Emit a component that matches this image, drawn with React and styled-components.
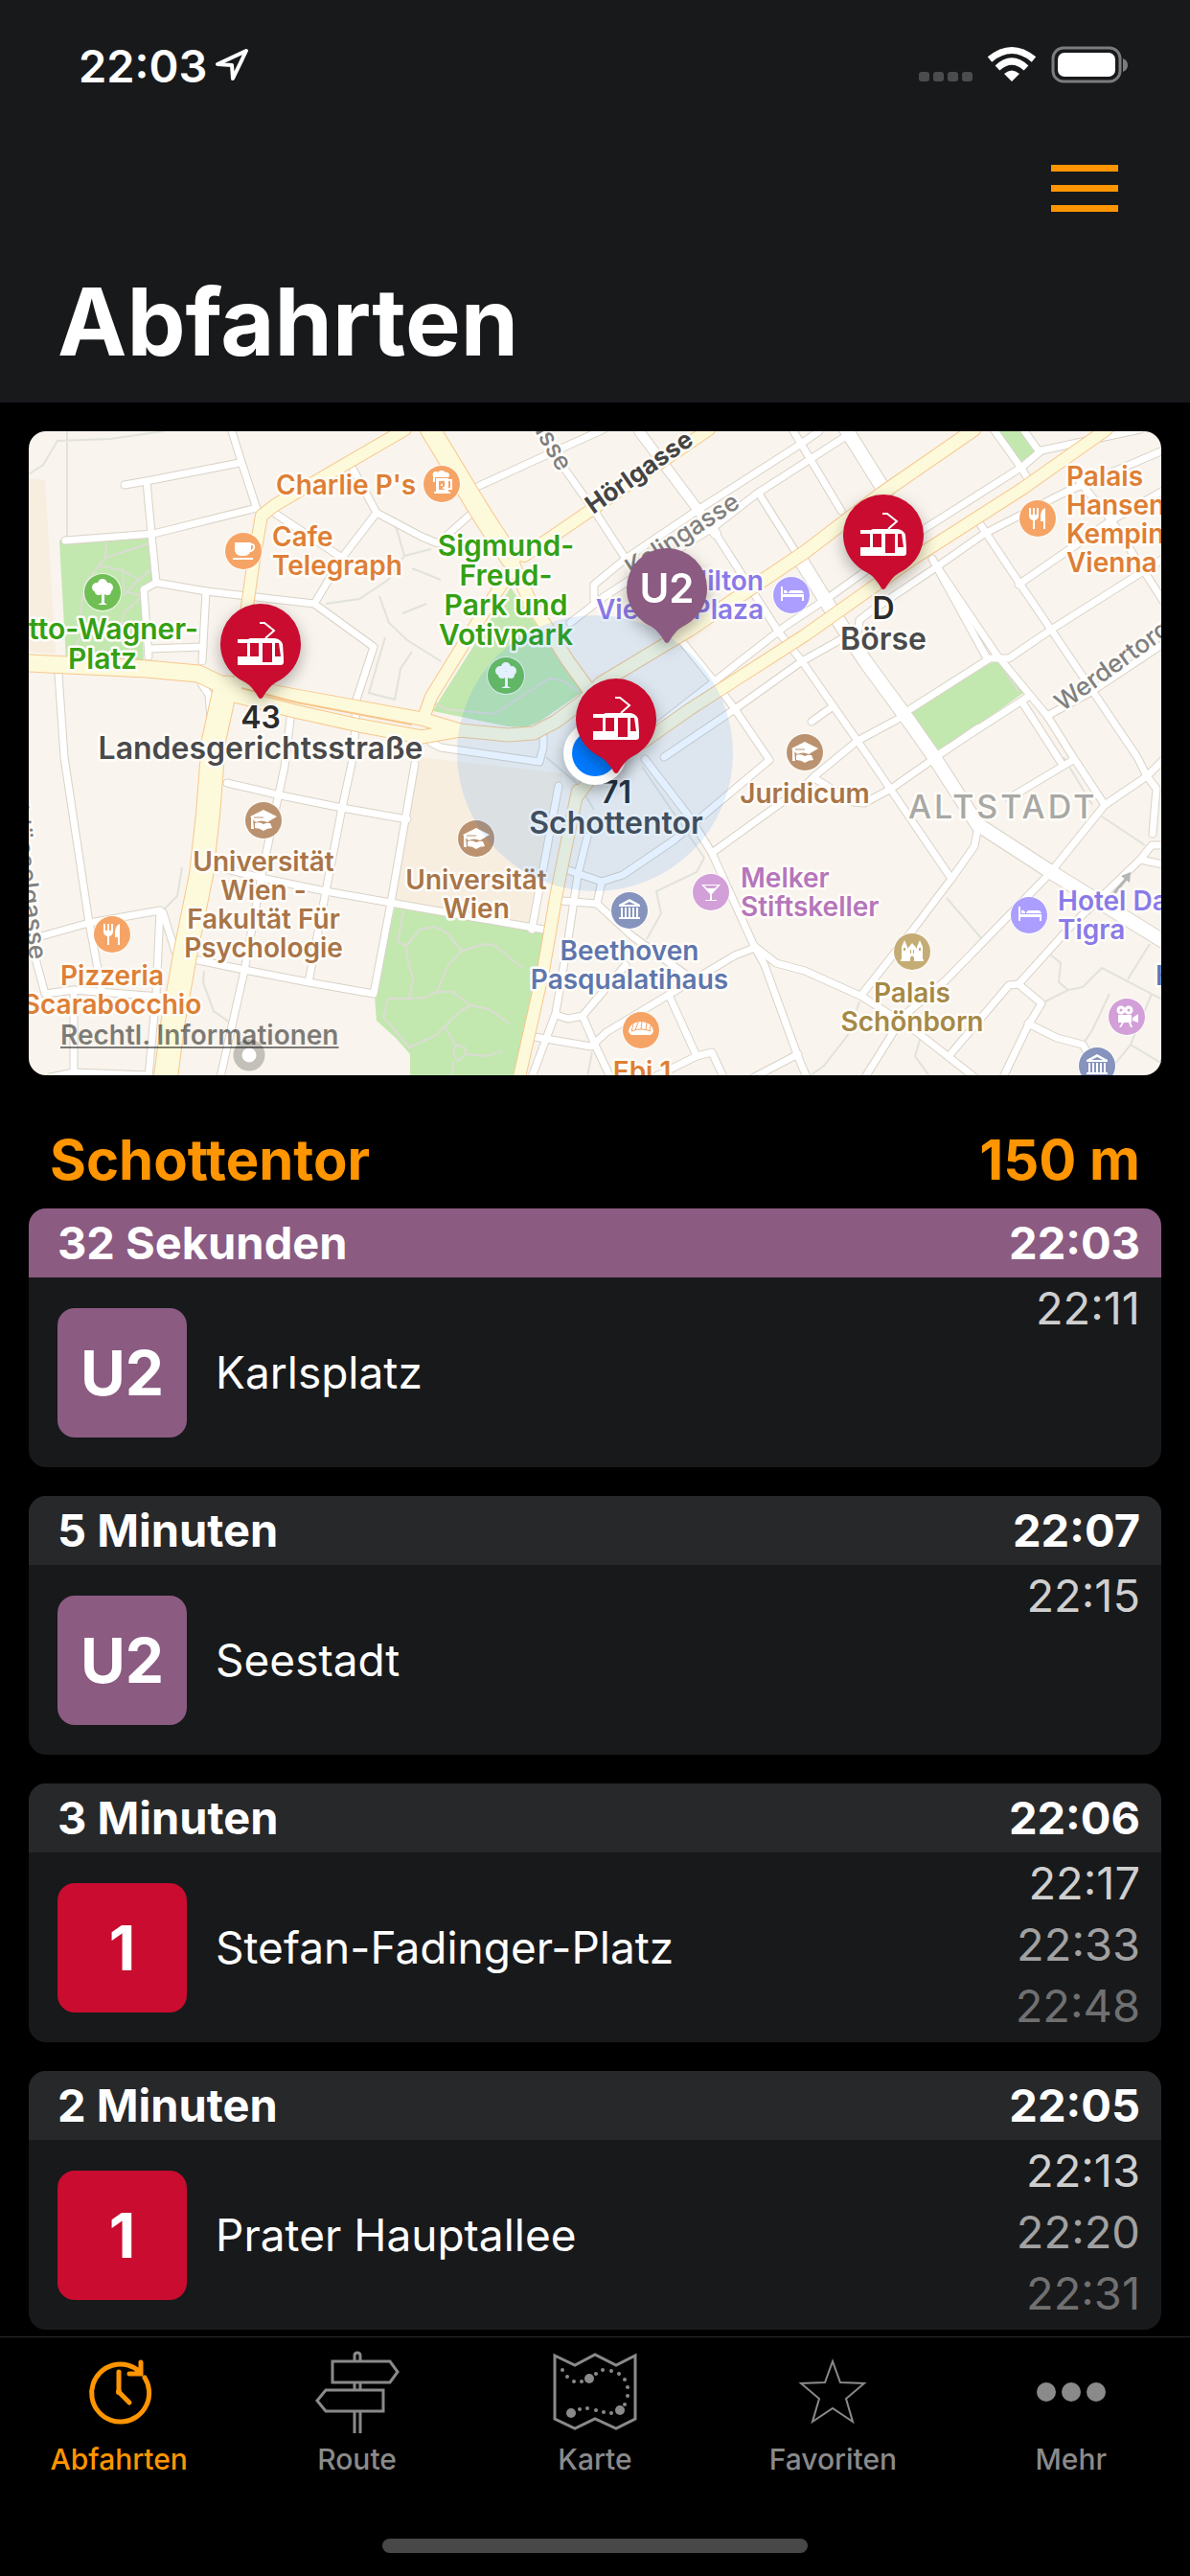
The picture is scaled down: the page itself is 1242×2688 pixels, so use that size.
import { useState } from 'react';
import styled, { createGlobalStyle } from 'styled-components';

const departures = [
  { line: 'U2', color: '#8b5b82', eta: '32 Sekunden', time: '22:03', to: 'Karlsplatz', next: ['22:11'], now: true },
  { line: 'U2', color: '#8b5b82', eta: '5 Minuten', time: '22:07', to: 'Seestadt', next: ['22:15'] },
  { line: '1', color: '#c90c2f', eta: '3 Minuten', time: '22:06', to: 'Stefan-Fadinger-Platz', next: ['22:17', '22:33', '22:48'] },
  { line: '1', color: '#c90c2f', eta: '2 Minuten', time: '22:05', to: 'Prater Hauptallee', next: ['22:13', '22:20', '22:31'] },
];

// [points, width]
const streets = [
  ['212,0 222,32 237,78'],
  ['100,56 123,52 220,33'],
  ['123,52 128,107 133,158'],
  ['38,114 130,107 238,80'],
  ['133,158 185,167 298,180 360,225 342,280 340,323 337,347 327,393 310,480 292,575'],
  ['185,167 181,240'],
  ['133,158 120,165 125,235'],
  ['125,227 182,225'],
  ['253,83 327,132'],
  ['337,37 363,85 327,132 298,180'],
  ['363,85 410,110 427,117 463,85'],
  ['470,57 540,25 600,-2'],
  ['31,253 37,340 63,513 77,587'],
  ['180,263 188,275 190,300'],
  ['273,300 267,350 243,463 225,563 200,674'],
  ['207,367 263,380 327,393 395,405'],
  ['403,347 378,492 360,587 292,575 225,562 177,552'],
  ['190,453 247,467 310,480 378,492 538,520'],
  ['13,527 63,513 137,500 133,587 125,674'],
  ['140,502 153,543'],
  ['5,543 17,587 47,583 137,590'],
  ['47,583 47,674'],
  ['23,674 47,669 125,672'],
  ['420,325 430,330 533,345 537,330 537,318'],
  ['553,370 525,520'],
  ['583,423 573,463 563,530 550,607 525,674'],
  ['563,458 598,470 620,463 673,427 773,343'],
  ['680,217 717,263 737,290 773,343'],
  ['643,342 690,403 713,440 757,537 768,557 803,653 812,674'],
  ['598,470 593,493'],
  ['557,490 593,493 630,527 690,570'],
  ['623,557 578,610 563,613 550,609'],
  ['578,610 590,638 607,674'],
  ['528,632 587,642 603,627 668,588 737,547 755,540'],
  ['668,588 697,652 653,674'],
  ['697,652 713,648 725,674'],
  ['757,537 780,555 810,563 830,572 870,590 927,627 987,674'],
  ['713,440 810,370 820,360 865,323 917,295'],
  ['817,303 838,288'],
  ['820,362 860,387 872,388 900,373 990,310'],
  ['637,0 697,80 717,107', 10],
  ['717,107 783,210 807,240 865,323 963,467'],
  ['990,417 987,433 963,467 923,520 870,587'],
  ['762,65 803,130'],
  ['797,-2 848,83'],
  ['530,-2 562,43 593,87 623,133'],
  ['590,176 590,160 623,133 697,83 800,17 825,0'],
  ['565,200 600,173 640,147 715,100 760,65 850,7'],
  ['1007,-2 1037,40 1043,50'],
  ['1038,-2 1055,22'],
  ['1160,-2 1057,20 1037,37 933,103 837,172 790,203 717,260 653,310'],
  ['1184,20 1083,63 997,107 947,142 880,187 867,197 866,207 807,240 737,290 663,340'],
  ['993,97 1033,157 1067,207 1157,340 1167,360 1123,390 1065,462 957,573 913,610 873,674'],
  ['943,133 1000,237'],
  ['947,140 1010,233 1063,297 1090,340 1123,390'],
  ['920,290 1003,237 1023,237 1067,207 1184,133'],
  ['1033,160 1130,93 1184,62'],
  ['1097,53 1130,93 1184,177'],
  ['1063,297 1107,273 1184,222'],
  ['950,337 1043,277'],
  ['1037,283 1077,345'],
  ['1023,383 1090,343'],
  ['1167,360 1184,343'],
  ['1167,360 1177,373 1173,420'],
  ['1184,432 1172,432 1160,447 1087,517 1033,577'],
  ['1160,447 1184,452'],
  ['962,650 1023,578 1033,577 1057,597 1043,620 1017,674'],
  ['1043,618 1073,633 1100,640 1107,652'],
  ['757,674 803,650'],
  ['873,240 917,300'],
  ['853,-2 895,65', 14],
  ['803,130 840,190 873,240 917,300 943,337 990,410 1067,460 1184,532', 14],
];

const avenues = [
  ['393,-2 257,77 243,88 235,133 228,183 220,263', 12],
  ['419,-2 473,87 503,133', 20],
  ['503,133 523,177 563,240 587,273 607,290', 13],
  ['710,-2 517,130', 12],
  ['503,145 457,217 420,277 412,299', 12],
  ['-2,242 123,248 177,253 207,267', 17],
  ['207,262 273,275 410,300 450,312', 13],
  ['215,276 277,292 345,307 410,319 450,312', 13],
  ['450,312 500,317 527,315 550,303 577,283 597,263 690,207 810,126 890,65 987,-2', 13],
  ['573,380 600,345 643,323 690,290 810,213 923,133 1037,60 1125,-2', 12],
  ['573,375 560,437 550,487 537,563 512,674', 12],
  ['205,268 193,323 187,400 180,463 163,547 150,620 143,674', 24],
];

const footpaths = [
  'M40 0V110', 'M0 45L15 35L30 10L85 8L140 0', 'M382 95L392 130L420 123', 'M392 130L375 155L345 175L310 180',
  'M366 172L376 200L395 218L430 240', 'M372 215L355 273L382 280L388 248L400 230', 'M183 563L182 575L193 605L210 617',
  'M160 455L155 485L140 500', 'M540 340L575 370L590 395', 'M640 350L705 445L697 460L655 480L660 503L645 530',
  'M958 487L995 530', 'M1120 402L1165 432', 'M1065 545L1077 555L1075 575L1085 583L1100 580L1120 560L1183 593',
  'M1085 583L1057 597', 'M1170 535L1147 572', 'M1128 587L1110 625L1100 640', 'M1172 587L1150 640L1130 665', 'M1150 640L1183 660',
  'M867 595L855 630L830 662L815 673', 'M930 635L925 652L940 673', 'M588 648L583 673', 'M1080 340L1110 390',
  'M390 190L415 180M400 143L430 155',
];

const parkPaths = [
  'M81 116L80 132L60 157L55 180L54 200', 'M80 132L126 117', 'M72 140L98 145L115 155L128 143', 'M98 145L100 170L115 155M104 168L118 172L99 190L96 210L110 235', 'M60 205L45 230',
  'M424 284L435 290L486 295L543 258L557 260L575 272',
  'M391 500L385 533L394 537L408 520L424 517L436 523L452 542L475 535L487 537L515 560', 'M394 537L395 550L401 570L397 592L414 591L426 585L438 557L452 542',
  'M426 585L442 585L461 599L480 603L502 618', 'M461 599L450 605L434 621L424 631L397 643L378 620L370 612L375 592L397 592', 'M434 621L445 640L455 643L456 650L448 657L443 650L445 640M456 650L478 652L494 647M443 657L442 673',
  'M1012 239L1033 272',
];

const pois = [
  { x: 431, y: 55, kind: 'beer', color: '#f6a465' },
  { x: 224, y: 125, kind: 'cup', color: '#f6a465' },
  { x: 77, y: 168, kind: 'tree', color: '#6fbf55' },
  { x: 498, y: 255, kind: 'tree', color: '#6fbf55' },
  { x: 1053, y: 91, kind: 'fork', color: '#f6a465' },
  { x: 87, y: 525, kind: 'fork', color: '#f6a465' },
  { x: 796, y: 171, kind: 'bed', color: '#ab9eff' },
  { x: 1044, y: 505, kind: 'bed', color: '#ab9eff' },
  { x: 810, y: 335, kind: 'cap', color: '#bb926f' },
  { x: 245, y: 406, kind: 'cap', color: '#bb926f' },
  { x: 467, y: 425, kind: 'cap', color: '#bb926f' },
  { x: 627, y: 500, kind: 'museum', color: '#8593bd' },
  { x: 1115, y: 662, kind: 'museum', color: '#8593bd' },
  { x: 712, y: 481, kind: 'drink', color: '#d29fd8' },
  { x: 639, y: 625, kind: 'bread', color: '#f6a465' },
  { x: 922, y: 543, kind: 'castle', color: '#c4ac74' },
  { x: 1146, y: 611, kind: 'film', color: '#d29fd8' },
];

const orange = '#de7f35';
const green = '#34a013';
const brown = '#a97548';
const blue = '#5f76ad';
const violet = '#8a7ae8';
const pink = '#b676bb';
const sand = '#a58946';

const labels = [
  { x: 258, y: 66, color: orange, lines: ["Charlie P's"] },
  { x: 254, y: 120, color: orange, lines: ['Cafe', 'Telegraph'] },
  { x: 77, y: 217, color: green, anchor: 'middle', lines: ['Otto-Wagner-', 'Platz'] },
  { x: 498, y: 130, color: green, anchor: 'middle', lines: ['Sigmund-', 'Freud-', 'Park und', 'Votivpark'] },
  { x: 767, y: 166, color: violet, anchor: 'end', lines: ['Hilton', 'Vienna Plaza'] },
  { x: 1083, y: 57, color: orange, lines: ['Palais', 'Hansen', 'Kempinski', 'Vienna'] },
  { x: 810, y: 388, color: brown, anchor: 'middle', lines: ['Juridicum'] },
  { x: 245, y: 459, color: brown, anchor: 'middle', lines: ['Universität', 'Wien -', 'Fakultät Für', 'Psychologie'] },
  { x: 467, y: 478, color: brown, anchor: 'middle', lines: ['Universität', 'Wien'] },
  { x: 627, y: 552, color: blue, anchor: 'middle', lines: ['Beethoven', 'Pasqualatihaus'] },
  { x: 743, y: 476, color: pink, lines: ['Melker', 'Stiftskeller'] },
  { x: 640, y: 678, color: orange, anchor: 'middle', lines: ['Ebi 1'] },
  { x: 87, y: 578, color: orange, anchor: 'middle', lines: ['Pizzeria', 'Scarabocchio'] },
  { x: 1074, y: 500, color: violet, lines: ['Hotel Das', 'Tigra'] },
  { x: 922, y: 596, color: sand, anchor: 'middle', lines: ['Palais', 'Schönborn'] },
  { x: 1176, y: 578, color: blue, lines: ['H'] },
];

const stops = [
  { x: 242, y: 222, line: '43', name: 'Landesgerichtsstraße' },
  { x: 892, y: 108, line: 'D', name: 'Börse' },
  { x: 613, y: 300, line: '71', name: 'Schottentor' },
];

const glyphs = {
  beer: (
    <>
      <path d="M-9 -8C-11 -13 -5 -14 -4 -12C-2 -15 3 -14 4 -12C8 -13 9 -8 7 -7H-7V-2H-9Z" />
      <path d="M-6 -6H7V8H-6ZM-8 8H9V10H-8Z" />
      <path d="M7 -4H10V5H7" fill="none" stroke="#fff" strokeWidth="2" />
      <path d="M-3 -3H3V6H-3Z" fill="#f6a465" />
      <path d="M-1 0H1V2H-1ZM1 3H3V5H1Z" />
    </>
  ),
  cup: (
    <>
      <path d="M-9 -9H8V-2Q7 5 1 5H-3Q-9 4 -9 -2Z" />
      <path d="M8 -7Q12 -7 11 -3Q10 0 7 0" fill="none" stroke="#fff" strokeWidth="2" />
      <path d="M-11 7H10V9H-11Z" />
    </>
  ),
  tree: (
    <>
      <circle cx="0" cy="-9" r="5" />
      <circle cx="-6" cy="-5" r="5" />
      <circle cx="6" cy="-5" r="5" />
      <circle cx="-4" cy="-1" r="4" />
      <circle cx="5" cy="-1" r="4" />
      <path d="M-1 -4H2V11L5 13H-5L-1 11Z" />
    </>
  ),
  fork: (
    <>
      <path d="M-9 -11H-7V-4H-5V-11H-3V-4H-1V-11H1V-3Q1 1 -3 2V11H-5V2Q-9 1 -9 -3Z" />
      <path d="M8 -11V11H6V3H3V-3Q4 -10 8 -11Z" />
    </>
  ),
  bed: (
    <path d="M-11 -9H-9V-1H13V6H11V2H-9V6H-11ZM-8 -5Q-5 -6 -4 -3V-2H-8ZM-3 -3L-1 -5H10Q12 -5 13 -2H-3Z" />
  ),
  cap: (
    <>
      <path d="M-14 -4L0 -11L14 -4L4 2Q-2 -1 -8 2Z" />
      <path d="M-9 3Q-4 1 0 4Q4 2 7 3L9 8Q4 8 0 11Q-4 8 -9 8ZM-13 -3H-11L-10 9H-13Z" />
      <path d="M-10 -3H0" stroke="#bb926f" strokeWidth="1" />
    </>
  ),
  museum: (
    <>
      <path d="M0 -12L11 -6V-4H-11V-6ZM-9 -3H-7V7H-9ZM-5 -3H-3V7H-5ZM-1 -3H1V7H-1ZM3 -3H5V7H3ZM7 -3H9V7H7ZM-11 7H11V9H-11Z" />
      <path d="M0 -9L6 -6H-6Z" fill="#8593bd" />
    </>
  ),
  drink: (
    <path d="M-10 -8H10L1 2V8H6V9H-6V8H-1V2ZM-7 -7L-4 -4H4L7 -7Z" fillRule="evenodd" />
  ),
  bread: (
    <>
      <path d="M-13 1Q-12 -8 0 -9Q12 -8 13 1Q13 3 10 5H-10Q-13 3 -13 1Z" />
      <path d="M-10 1L-8 -6M-6 0L-3 -8M0 -1L1 -9M5 0L6 -8M9 1L10 -5M-10 1Q0 -3 10 1" fill="none" stroke="#f6a465" strokeWidth="1" />
    </>
  ),
  castle: (
    <>
      <path d="M-11 -5L-8 -12L-5 -5V-3L0 -9L5 -3V-5L8 -12L11 -5V8H12V10H-12V8H-11Z" />
      <path d="M-2 10V6Q0 3 2 6V10ZM-9 -4H-7V-1H-9ZM7 -4H9V-1H7ZM-2 -2H-1V2H-2ZM1 -2H2V2H1Z" fill="#c4ac74" />
    </>
  ),
  film: (
    <>
      <path d="M-9 -2H5V6H-9ZM6 1L12 -3V6L6 4ZM-5 6H-3L-6 11H-8ZM2 6H4L6 11H4Z" />
      <circle cx="-6" cy="-7" r="3" fill="none" stroke="#fff" strokeWidth="3" />
      <circle cx="2" cy="-7" r="3" fill="none" stroke="#fff" strokeWidth="3" />
    </>
  ),
};

const Lines = ({ roads, casing, fill }) => (
  <g fill="none" strokeLinejoin="round" strokeLinecap="round">
    {roads.map(([points, width = 7]) => (
      <polyline key={points} points={points} stroke={casing} strokeWidth={width + 2} />
    ))}
    {roads.map(([points, width = 7]) => (
      <polyline key={points} points={points} stroke={fill} strokeWidth={width} />
    ))}
  </g>
);

const Pin = ({ x, y, color, children }) => (
  <PinGroup transform={`translate(${x} ${y})`}>
    <path d="M-42 0A42 42 0 1 1 42 0C42 18 31 33 16 40Q9 44 2 56Q0 58 -2 56Q-9 44 -16 40C-31 33 -42 18 -42 0Z" fill={color} />
    {children}
  </PinGroup>
);

const Tram = () => (
  <g fill="#fff">
    <path
      fillRule="evenodd"
      d="M-24 -5H-13L-11 -6H15Q21 -5 23 0L24 14V19Q24 22 21 22H-24V13H-14V-1H-24ZM-11 -1V13H-2V-1ZM2 -1V19H12V-1ZM15 -1V13H21L19 -1Z"
    />
    <path d="M-1 -22H4L14 -14L5 -6" fill="none" stroke="#fff" strokeWidth="2" />
  </g>
);

const StationMap = () => (
  <MapFrame>
    <MapDrawing viewBox="0 0 1182 672" role="img" aria-label="Karte der Umgebung">
      <rect width="1182" height="672" fill="#f9f4ed" />
      <path d="M0 49L17 51L28 232L0 230ZM408 340L557 357L530 520L382 492Z" fill="#f7eee0" />
      <g fill="#c2e8af">
        <path d="M32 114L127 112L130 163L117 165L120 240H39Z" />
        <path d="M503 163L578 272L533 303L518 309L500 308L422 292L427 283Z" />
        <path d="M382 497L390 498L540 523L508 673H398V650L383 633L363 615L361 590Z" />
        <path d="M1010 238L1038 273L948 337L919 294Z" />
        <path d="M1013 0H1037L1050 22L1036 32Z" />
      </g>
      <path d={footpaths.join('')} fill="none" stroke="#e1e3db" strokeWidth="2" />
      <path d={parkPaths.join('')} fill="none" stroke="#dcdcd4" strokeWidth="2" />
      <Lines roads={streets} casing="#d9d2c7" fill="#fff" />
      <Lines roads={avenues} casing="#f7c78c" fill="#fdfadb" />
      <path d="M222 268L280 283L400 306" fill="none" stroke="#f7c78c" strokeWidth="2" />
      <path d="M1133 482L1147 465" stroke="#b5b5b5" strokeWidth="3" />
      <path d="M1150 460L1149 471L1140 464Z" fill="#b5b5b5" />
      <circle cx="442" cy="691" r="19" fill={green} />

      {pois.map(({ x, y, kind, color }) => (
        <g key={`${x}-${y}`} transform={`translate(${x} ${y})`} fill="#fff">
          <circle r="20" opacity="0.7" />
          <circle r="19" fill={color} />
          {glyphs[kind]}
        </g>
      ))}

      {labels.map(({ x, y, color, anchor, lines }) => (
        <MapLabel key={`${x}-${y}`} $large={color === green} fill={color} textAnchor={anchor}>
          {lines.map((line, i) => (
            <tspan key={line} x={x} y={y + i * (color === green ? 31 : 30)}>
              {line}
            </tspan>
          ))}
        </MapLabel>
      ))}

      <StreetLabel $strong transform="translate(589 87) rotate(-35)">Hörlgasse</StreetLabel>
      <StreetLabel transform="translate(630 152) rotate(-33)">Kolingasse</StreetLabel>
      <StreetLabel transform="translate(553 43) rotate(60)" textAnchor="end">asse</StreetLabel>
      <StreetLabel transform="translate(1079 293) rotate(-36)">Werdertorgasse</StreetLabel>
      <StreetLabel transform="translate(1 552) rotate(83)" textAnchor="end">Schlösselgasse</StreetLabel>
      <DistrictLabel x="918" y="404">ALTSTADT</DistrictLabel>

      {stops.map(({ x, y, line, name }) => (
        <StopLabel key={name} textAnchor="middle">
          <tspan x={x} y={y + 88} fill="#2b2b2b">{line}</tspan>
          <tspan x={x} y={y + 120}>{name}</tspan>
        </StopLabel>
      ))}

      <circle cx="591" cy="336" r="144" fill="#007aff" fillOpacity="0.11" />
      <circle cx="230" cy="651" r="12" fill="#fff" stroke="#c3c0ba" strokeWidth="9" />
      <Pin x={666} y={164} color="#8b5b82">
        <PinText y="15" textAnchor="middle">U2</PinText>
      </Pin>
      <PinGroup>
        <circle cx="591" cy="336" r="33" fill="#fff" />
      </PinGroup>
      <circle cx="591" cy="336" r="24" fill="#007aff" />
      {stops.map(({ x, y, line }) => (
        <Pin key={line} x={x} y={y} color="#c90c2f">
          <Tram />
        </Pin>
      ))}
    </MapDrawing>
    <LegalLink href="#legal">Rechtl. Informationen</LegalLink>
  </MapFrame>
);

const ClockIcon = () => (
  <TabIcon viewBox="-44 -44 88 88" strokeWidth="5" strokeLinecap="round">
    <path d="M27 -14A30 30 0 1 1 22 -20M23 -30V-18H11M0 -20V1L11 12" />
    <circle cy="1" r="3" fill="currentColor" stroke="none" />
  </TabIcon>
);

const SignIcon = () => (
  <TabIcon viewBox="-44 -44 88 88" strokeWidth="3">
    <path d="M-26 -31H34L42 -20L34 -9H-26ZM27 -1H-33L-42 10L-33 21H27ZM-3 -31V-37Q-3 -40 0 -40Q3 -40 3 -37V-31M-3 -9V-1M3 -9V-1M-3 21V44M3 21V44" />
  </TabIcon>
);

const MapIcon = () => (
  <TabIcon viewBox="-44 -44 88 88" strokeWidth="3">
    <path d="M-42 -37L-21 -27L0 -38L22 -27L42 -37V29L22 39L0 29L-21 39L-42 29Z" />
    <g fill="currentColor" stroke="none">
      <circle cx="-6" cy="-13" r="5" />
      <circle cx="26" cy="20" r="5" />
      <circle cx="-25" cy="23" r="5" />
      {[
        [-34, -22], [-29, -15], [-22, -10], [-14, -10], [1, -18], [8, -22], [17, -21], [25, -18], [31, -12],
        [34, -4], [34, 5], [31, 14], [-16, 19], [-8, 18], [1, 20], [9, 22], [17, 23],
      ].map(([x, y]) => (
        <circle key={`${x},${y}`} cx={x} cy={y} r="2" />
      ))}
    </g>
  </TabIcon>
);

const StarIcon = () => (
  <TabIcon viewBox="-44 -44 88 88" strokeWidth="2">
    <path d="M0 -31L8 -9L33 -8L14 8L21 32L0 18L-21 32L-14 8L-33 -8L-8 -9Z" />
  </TabIcon>
);

const MoreIcon = () => (
  <TabIcon viewBox="-44 -44 88 88">
    <g fill="currentColor" stroke="none">
      <circle cx="-26" cy="1" r="10" />
      <circle cy="1" r="10" />
      <circle cx="26" cy="1" r="10" />
    </g>
  </TabIcon>
);

const tabs = [
  { name: 'Abfahrten', Icon: ClockIcon },
  { name: 'Route', Icon: SignIcon },
  { name: 'Karte', Icon: MapIcon },
  { name: 'Favoriten', Icon: StarIcon },
  { name: 'Mehr', Icon: MoreIcon },
];

export default function App() {
  const [active, setActive] = useState('Abfahrten');

  return (
    <Page>
      <GlobalStyle />
      <Header>
        <StatusBar>
          <Clock>
            22:03
            <svg width="36" height="36" viewBox="0 0 36 36" fill="none" stroke="#fff" strokeWidth="4" strokeLinejoin="round">
              <path d="M33 3L3 17L18 18L19 32Z" />
            </svg>
          </Clock>
          <svg width="218" height="40" viewBox="0 0 218 40" fill="#fff">
            <g fill="#4b4c4e">
              <rect x="0" y="27" width="11" height="10" rx="3" />
              <rect x="15" y="27" width="11" height="10" rx="3" />
              <rect x="30" y="27" width="11" height="10" rx="3" />
              <rect x="45" y="27" width="11" height="10" rx="3" />
            </g>
            <path d="M97 37L89 29Q97 22 105 29Z" />
            <path d="M82 23Q97 9 112 23" fill="none" stroke="#fff" strokeWidth="7" />
            <path d="M74 14Q97 -5 120 14" fill="none" stroke="#fff" strokeWidth="7" />
            <rect x="140" y="2" width="70" height="35" rx="11" fill="none" stroke="#7b7c7d" strokeWidth="3" />
            <rect x="145" y="7" width="60" height="25" rx="7" />
            <path d="M213 13Q218 15 218 20Q218 25 213 27Z" fill="#7b7c7d" />
          </svg>
        </StatusBar>
        <NavRow>
          <MenuButton type="button" aria-label="Menü">
            <svg width="70" height="50" viewBox="0 0 70 50" fill="#ff9500">
              <path d="M0 0H70V7H0ZM0 21H70V28H0ZM0 42H70V49H0Z" />
            </svg>
          </MenuButton>
        </NavRow>
        <Title>Abfahrten</Title>
      </Header>
      <Main>
        <StationMap />
        <StationHeading>
          <span>Schottentor</span>
          <span>150 m</span>
        </StationHeading>
        <List>
          {departures.map(({ line, color, eta, time, to, next, now }) => (
            <Card key={time}>
              <CardHeader $color={now && color}>
                <span>{eta}</span>
                <time>{time}</time>
              </CardHeader>
              <CardBody>
                <Badge $color={color}>{line}</Badge>
                <Destination>{to}</Destination>
                <Times>
                  {next.map((t) => (
                    <time key={t}>{t}</time>
                  ))}
                </Times>
              </CardBody>
            </Card>
          ))}
        </List>
      </Main>
      <TabBar>
        <Tabs>
          {tabs.map(({ name, Icon }) => (
            <Tab key={name} type="button" $active={name === active} onClick={() => setActive(name)}>
              <Icon />
              {name}
            </Tab>
          ))}
        </Tabs>
        <HomeIndicator />
      </TabBar>
    </Page>
  );
}

const GlobalStyle = createGlobalStyle`
  * {
    box-sizing: border-box;
  }
  body {
    margin: 0;
    background: #000;
    color: #fff;
    font-family: Inter, 'Liberation Sans', sans-serif;
  }
  button {
    border: none;
    background: transparent;
    padding: 0;
    font-family: inherit;
    cursor: pointer;
  }
`;

const Page = styled.div`
  display: flex;
  flex-direction: column;
  min-height: 100vh;
`;

const Header = styled.header`
  background: #18191b;
`;

const StatusBar = styled.div`
  display: flex;
  align-items: center;
  justify-content: space-between;
  height: 136px;
  padding: 0 65px 0 82px;
`;

const Clock = styled.div`
  display: flex;
  align-items: center;
  gap: 8px;
  font-size: 47px;
  font-weight: 600;
`;

const NavRow = styled.div`
  display: flex;
  align-items: center;
  justify-content: flex-end;
  height: 122px;
  padding: 0 75px;
`;

const MenuButton = styled.button`
  display: flex;
`;

const Title = styled.h1`
  margin: 0;
  padding: 18px 60px 24px;
  font-size: 97px;
  line-height: 120px;
  font-weight: 700;
`;

const Main = styled.main`
  flex: 1;
  padding: 30px 30px 7px;
`;

const MapFrame = styled.section`
  position: relative;
  overflow: hidden;
  border-radius: 18px;
`;

const MapDrawing = styled.svg`
  display: block;
  width: 100%;
`;

const MapText = styled.text`
  font-weight: 500;
  paint-order: stroke;
  stroke: #fffdf9;
  stroke-width: 5px;
  stroke-linejoin: round;
`;

const MapLabel = styled(MapText)`
  font-size: ${({ $large }) => ($large ? 30 : 28)}px;
  font-weight: 600;
`;

const StreetLabel = styled(MapText)`
  font-size: 26px;
  font-weight: ${({ $strong }) => ($strong ? 700 : 500)};
  fill: ${({ $strong }) => ($strong ? '#444' : '#808080')};
`;

const DistrictLabel = styled(MapText)`
  font-size: 34px;
  letter-spacing: 3px;
  fill: #a8a8a4;
`;

const StopLabel = styled(MapText)`
  font-size: 32px;
  font-weight: 600;
  fill: #4a4a4a;
`;

const PinText = styled.text`
  font-size: 42px;
  font-weight: 600;
  fill: #fff;
`;

const PinGroup = styled.g`
  filter: drop-shadow(0 6px 8px rgba(0, 0, 0, 0.3));
`;

const LegalLink = styled.a`
  position: absolute;
  left: 33px;
  bottom: 24px;
  color: rgba(0, 0, 0, 0.5);
  font-size: 28px;
  line-height: 36px;
  font-weight: 600;
`;

const StationHeading = styled.h2`
  display: flex;
  justify-content: space-between;
  margin: 0;
  padding: 52px 22px 15px;
  color: #ff9500;
  font-size: 58px;
  line-height: 72px;
  font-weight: 700;
`;

const List = styled.div`
  display: grid;
  gap: 30px;
`;

const Card = styled.article`
  overflow: hidden;
  border-radius: 18px;
  background: #18191b;
`;

const CardHeader = styled.div`
  display: flex;
  justify-content: space-between;
  padding: 0 22px 0 30px;
  background: ${({ $color }) => $color || '#27282a'};
  font-size: 47px;
  line-height: 72px;
  font-weight: 700;
`;

const CardBody = styled.div`
  display: flex;
  align-items: center;
  gap: 30px;
  min-height: 198px;
  padding: 0 22px 0 30px;
`;

const Badge = styled.div`
  display: grid;
  place-items: center;
  width: 135px;
  height: 135px;
  border-radius: 18px;
  background: ${({ $color }) => $color};
  font-size: 64px;
  font-weight: 700;
`;

const Destination = styled.div`
  flex: 1;
  font-size: 46px;
`;

const Times = styled.div`
  display: flex;
  flex-direction: column;
  align-self: flex-start;
  align-items: flex-end;
  color: #cfcfcf;
  font-size: 47px;
  line-height: 64px;
  time:nth-child(2) {
    color: #a1a1a1;
  }
  time:nth-child(3) {
    color: #707071;
  }
`;

const TabBar = styled.footer`
  border-top: 1px solid #2b2b2b;
  padding-bottom: 24px;
`;

const Tabs = styled.nav`
  display: grid;
  grid-template-columns: repeat(5, 1fr);
  padding: 12px 0 65px;
`;

const Tab = styled.button`
  display: flex;
  flex-direction: column;
  align-items: center;
  gap: 9px;
  color: ${({ $active }) => ($active ? '#ff9500' : '#8a8a8a')};
  font-size: 30px;
  line-height: 36px;
  font-weight: 500;
`;

const TabIcon = styled.svg`
  width: 88px;
  height: 88px;
  fill: none;
  stroke: currentColor;
`;

const HomeIndicator = styled.div`
  width: 444px;
  height: 15px;
  margin: 0 auto;
  border-radius: 8px;
  background: #484848;
`;
